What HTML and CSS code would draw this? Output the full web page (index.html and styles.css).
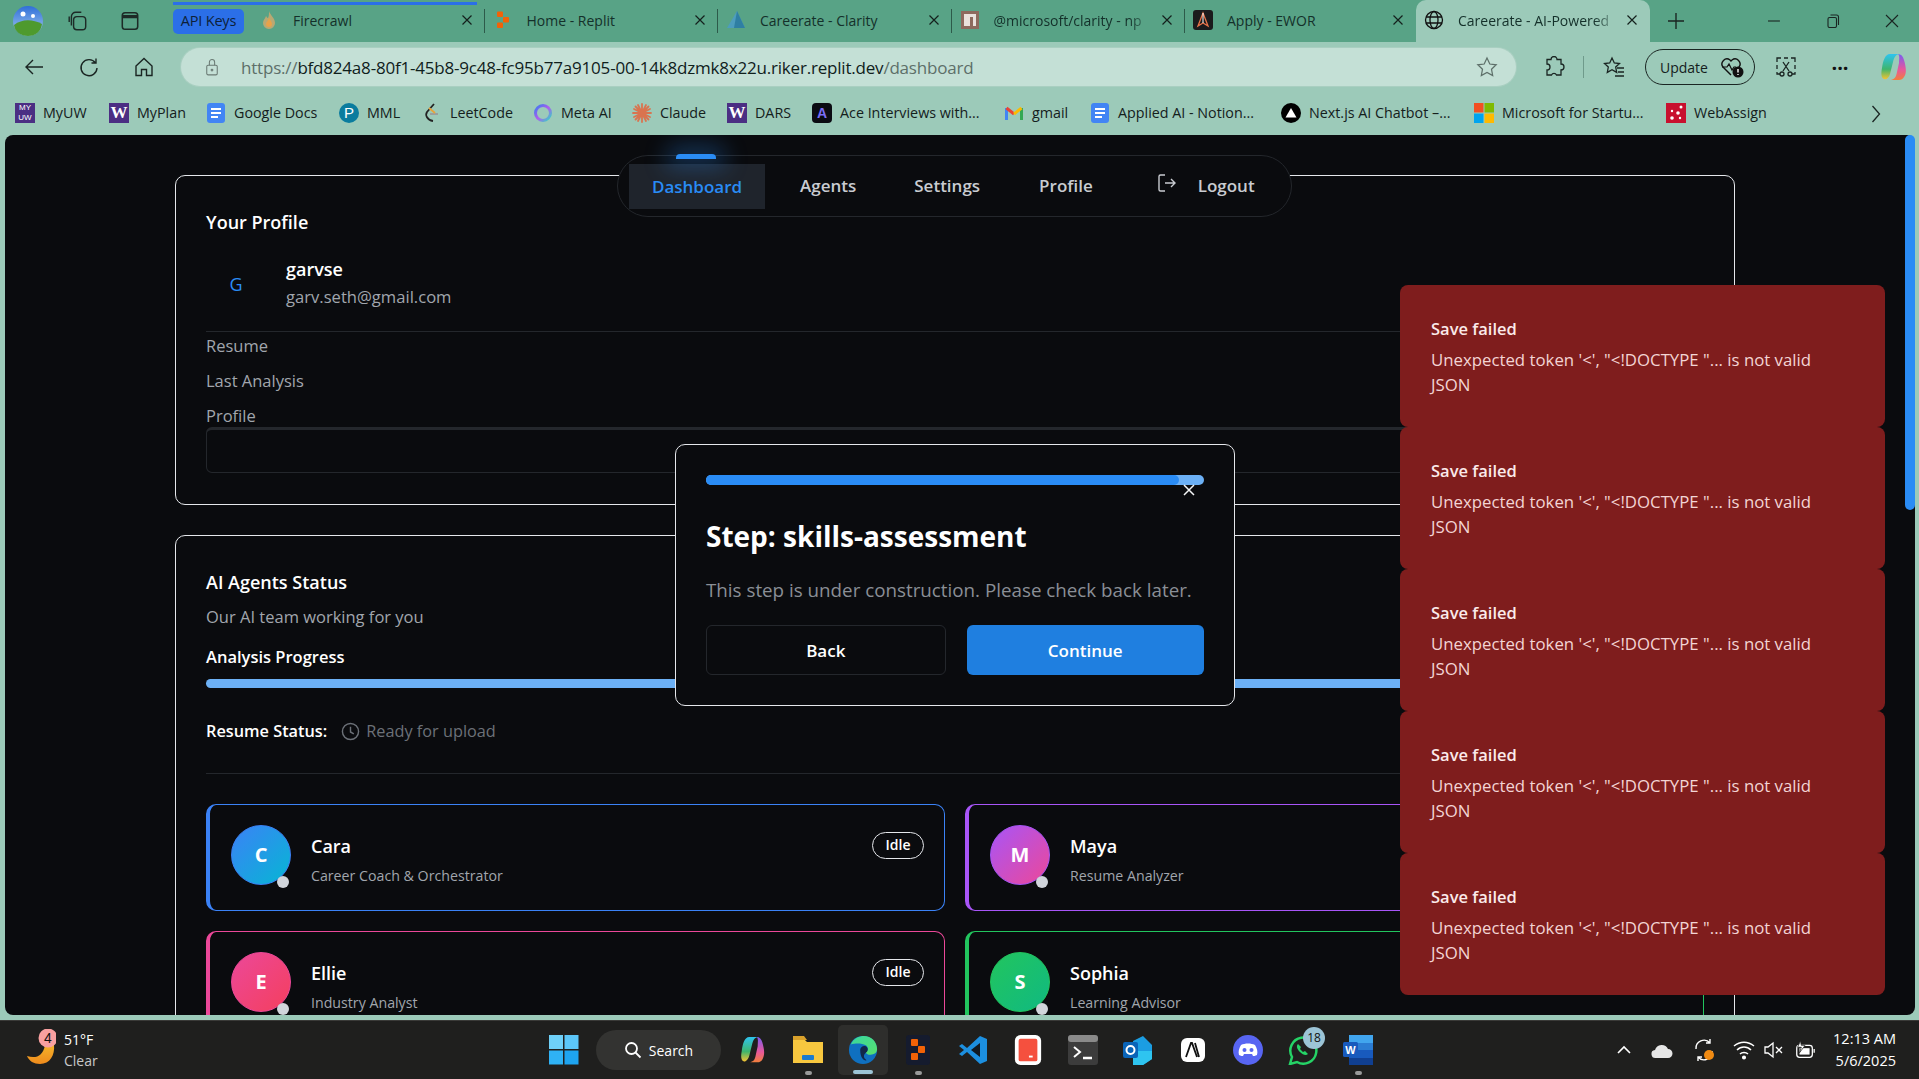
FILE: index.html
```html
<!DOCTYPE html>
<html lang="en">
<head>
    <meta charset="UTF-8">
    <title>Careerate - AI-Powered</title>
    <link rel="stylesheet" href="styles.css">
</head>
<body>
    <!-- browser tabs -->
    <div class="tabstrip">
        <svg class="profile-pic" viewBox="0 0 30 30"><defs><linearGradient id="sky" x1="0" y1="0" x2="0" y2="1"><stop offset="0" stop-color="#2f6fd8"/><stop offset="1" stop-color="#a9cdf2"/></linearGradient></defs><circle cx="15" cy="15" r="15" fill="url(#sky)"/><path d="M1 19c8-6 18-6 28-1-1 8-7 12-14 12S2 26 1 19z" fill="#4e9a2e"/><circle cx="10" cy="8" r="2.5" fill="#fff"/><circle cx="20" cy="10" r="2" fill="#fff"/></svg>
        <svg class="strip-icon icon-workspaces" viewBox="0 0 20 20" fill="none" stroke="#1d2b27" stroke-width="1.3"><rect x="6" y="6" width="11" height="12" rx="3"/><path d="M4 14V6a4 4 0 0 1 4-4h5"/><path d="M2 11V6"/></svg>
        <svg class="strip-icon icon-vtabs" viewBox="0 0 20 20" fill="none" stroke="#1d2b27" stroke-width="1.4"><rect x="3" y="2.500" width="14" height="15" rx="2.500"/><path d="M3 6h14" stroke-width="3"/></svg>

        <div class="group-line"></div>
        <span class="group-pill">API Keys</span>

        <div class="tab tab-first">
            <svg class="tab-icon" viewBox="0 0 20 20"><path d="M10 1c1 4 6 7 6 12a6 6 0 0 1-12 0c0-3 2-4 3-7 1 1 1 2 2 2 1-2 1-4 1-7z" fill="#b9a873"/><path d="M10 8c1 2 3 4 3 6a3 3 0 0 1-6 0c0-2 2-3 3-6z" fill="#e8a24a"/></svg>
            <span class="tab-title">Firecrawl</span>
            <svg class="tab-close" viewBox="0 0 12 12"><path d="M1.500 1.500l9 9M10.500 1.500l-9 9"/></svg>
        </div>
        <div class="tab">
            <svg class="tab-icon" viewBox="0 0 20 20" fill="#f26207"><rect x="4" y="1.500" width="6" height="5.500" rx="1"/><rect x="10" y="7" width="6" height="5.500" rx="1"/><rect x="4" y="12.500" width="6" height="5.500" rx="1"/></svg>
            <span class="tab-title">Home - Replit</span>
            <svg class="tab-close" viewBox="0 0 12 12"><path d="M1.500 1.500l9 9M10.500 1.500l-9 9"/></svg>
        </div>
        <div class="tab">
            <svg class="tab-icon" viewBox="0 0 20 20"><path d="M11 1L1 18h18z" fill="#4d9dbd"/><path d="M11 1l-3 17h11z" fill="#2f7fa3"/></svg>
            <span class="tab-title">Careerate - Clarity</span>
            <svg class="tab-close" viewBox="0 0 12 12"><path d="M1.500 1.500l9 9M10.500 1.500l-9 9"/></svg>
        </div>
        <div class="tab">
            <svg class="tab-icon" viewBox="0 0 20 20"><rect x="1" y="1" width="18" height="18" fill="#8d6a5d"/><path d="M4 4h12v12h-3V7h-3v9H4z" fill="#e9e2dc"/></svg>
            <span class="tab-title tab-fade">@microsoft/clarity - np</span>
            <svg class="tab-close" viewBox="0 0 12 12"><path d="M1.500 1.500l9 9M10.500 1.500l-9 9"/></svg>
        </div>
        <div class="tab tab-nosep">
            <svg class="tab-icon" viewBox="0 0 20 20"><rect width="20" height="20" rx="3" fill="#1b1b1d"/><path d="M10 3l5 13-5-3-5 3z" fill="none" stroke="#e8734a" stroke-width="1.300"/><path d="M10 3v10" stroke="#fff"/></svg>
            <span class="tab-title">Apply - EWOR</span>
            <svg class="tab-close" viewBox="0 0 12 12"><path d="M1.500 1.500l9 9M10.500 1.500l-9 9"/></svg>
        </div>
        <div class="tab tab-active">
            <svg class="tab-icon" viewBox="0 0 20 20" fill="none" stroke="#111" stroke-width="1.300"><circle cx="10" cy="10" r="8.500"/><ellipse cx="10" cy="10" rx="4" ry="8.500"/><path d="M2 7h16M2 13h16"/></svg>
            <span class="tab-title tab-fade">Careerate - AI-Powered</span>
            <svg class="tab-close" viewBox="0 0 12 12"><path d="M1.500 1.500l9 9M10.500 1.500l-9 9"/></svg>
        </div>

        <svg class="new-tab" viewBox="0 0 18 18"><path d="M9 1v16M1 9h16" stroke="#1a2522" stroke-width="1.400"/></svg>
        <div class="win-controls">
            <svg viewBox="0 0 14 14"><path d="M1 7h12"/></svg>
            <svg viewBox="0 0 14 14"><rect x="2" y="3.500" width="8.500" height="10" rx="1.500"/><path d="M4.500 1h6a2 2 0 0 1 2 2v8"/></svg>
            <svg viewBox="0 0 14 14"><path d="M1 1l12 12M13 1L1 13"/></svg>
        </div>
    </div>

    <!-- address bar -->
    <div class="toolbar">
        <svg class="nav-btn btn-back" viewBox="0 0 22 22"><path d="M20 11H3M10 4l-7 7 7 7"/></svg>
        <svg class="nav-btn btn-reload" viewBox="0 0 22 22"><path d="M17.500 7A8 8 0 1 0 19 12M18 2.500V7h-4.500"/></svg>
        <svg class="nav-btn btn-home" viewBox="0 0 22 22"><path d="M3 10l8-7.500 8 7.500v9.500h-5.500v-6h-5v6H3z"/></svg>
        <div class="addressbar">
            <svg class="lock" viewBox="0 0 16 20"><rect x="2" y="8" width="12" height="11" rx="1.500"/><path d="M5 8V4.500a3 3 0 0 1 6 0V8"/><circle cx="8" cy="13.500" r="1"/></svg>
            <span class="url"><span class="url-dim">https://</span>bfd824a8-80f1-45b8-9c48-fc95b77a9105-00-14k8dzmk8x22u.riker.replit.dev<span class="url-dim">/dashboard</span></span>
            <svg class="star" viewBox="0 0 22 22"><path d="M11 2l2.800 6 6.400.8-4.700 4.400 1.200 6.400L11 16.500l-5.700 3.100 1.200-6.400L1.800 8.800 8.200 8z"/></svg>
        </div>
        <svg class="tool-icon tool-ext" viewBox="0 0 22 22"><path d="M8 3.500a3 3 0 0 1 6 0h4v4.500a3 3 0 0 1 0 6V19h-4.500a2.800 2.800 0 0 0-5 0H4v-5a3 3 0 0 0 0-6V3.500z"/></svg>
        <span class="tool-sep"></span>
        <svg class="tool-icon tool-fav" viewBox="0 0 22 22"><path d="M9 2l2.300 5 5.200.6-3.800 3.500 1 5.300L9 13.800l-4.700 2.600 1-5.300L1.500 7.600 6.700 7zM14 12h7M15 16h6M12 20h9"/></svg>
        <div class="update-btn">
            <span>Update</span>
            <svg class="update-heart" viewBox="0 0 24 22"><path d="M11 19L3 11a5 5 0 0 1 7-7l1 1 1-1a5 5 0 0 1 7 7l-1 1" fill="none" stroke="#111" stroke-width="1.400"/><path d="M2 11h5l2-3 3 6 2-3h2" fill="none" stroke="#111" stroke-width="1.200"/><circle cx="18" cy="16" r="5.500" fill="#111"/><path d="M18 13v3.500M18 18v1" stroke="#fff" stroke-width="1.400"/></svg>
        </div>
        <svg class="tool-icon tool-shot" viewBox="0 0 22 22"><path d="M2 6V2h4M9 2h4M16 2h4v4M20 9v4M2 9v4M2 16v2h3M20 16v2h-3"/><path d="M8 6l6 9M14 6l-6 9"/><circle cx="7" cy="18" r="2"/><circle cx="15" cy="18" r="2"/></svg>
        <span class="tool-dots">···</span>
        <svg class="copilot" viewBox="0 0 28 30"><defs><linearGradient id="cpa" x1="0" y1="0" x2="0" y2="1"><stop offset="0" stop-color="#2ec4f0"/><stop offset=".6" stop-color="#3fb56c"/><stop offset="1" stop-color="#f5c332"/></linearGradient><linearGradient id="cpb" x1="0" y1="0" x2="0" y2="1"><stop offset="0" stop-color="#7a5cf0"/><stop offset=".6" stop-color="#e8589a"/><stop offset="1" stop-color="#f27f3c"/></linearGradient></defs><path d="M10 2h9c-4 1-5 4-6 8l-3 12c-1 4-4 6-6 5-3-1-3-6-2-11C3 9 5 2 10 2z" fill="url(#cpa)"/><path d="M18 2c3 0 5 2 6 6 2 7 3 13 0 17-1 2-3 3-5 3h-8c4-1 5-3 6-8l2-9c0-4 1-7-1-9z" fill="url(#cpb)"/></svg>
    </div>

    <!-- bookmarks -->
    <div class="bookmarks">
        <div class="bookmark"><span class="bm-icon bm-uw">MY<br>UW</span>MyUW</div>
        <div class="bookmark"><span class="bm-icon bm-w">W</span>MyPlan</div>
        <div class="bookmark"><svg class="bm-svg" viewBox="0 0 20 20"><rect x="1" width="18" height="20" rx="3" fill="#4285f4"/><path d="M5 5h10v2H5zM5 9h10v2H5zM5 13h7v2H5z" fill="#fff"/></svg>Google Docs</div>
        <div class="bookmark"><span class="bm-icon bm-mml">P</span>MML</div>
        <div class="bookmark"><svg class="bm-svg" viewBox="0 0 20 20" fill="none" stroke-width="1.800"><path d="M12 1L5 9c-2 3 0 8 6 9" stroke="#222"/><path d="M8 11h8" stroke="#9a9a9a"/><path d="M7 5l6 5" stroke="#e8a33a"/></svg>LeetCode</div>
        <div class="bookmark"><svg class="bm-svg" viewBox="0 0 20 20" fill="none"><defs><linearGradient id="meta" x1="0" y1="0" x2="1" y2="1"><stop offset="0" stop-color="#3a7bf0"/><stop offset=".5" stop-color="#b05cf0"/><stop offset="1" stop-color="#2ed9c3"/></linearGradient></defs><circle cx="10" cy="10" r="7.500" stroke="url(#meta)" stroke-width="3"/></svg>Meta AI</div>
        <div class="bookmark"><svg class="bm-svg" viewBox="0 0 20 20" stroke="#d9744f" stroke-width="1.800" stroke-linecap="round"><path d="M10 1v18M1 10h18M3.500 3.500l13 13M16.500 3.500l-13 13M6 2l8 16M14 2L6 18M2 6l16 8M18 6L2 14"/></svg>Claude</div>
        <div class="bookmark"><span class="bm-icon bm-w">W</span>DARS</div>
        <div class="bookmark"><span class="bm-icon bm-ace">A</span>Ace Interviews with...</div>
        <div class="bookmark"><svg class="bm-svg" viewBox="0 0 20 20" fill="none" stroke-width="3"><path d="M2.500 17V5" stroke="#4285f4"/><path d="M17.500 17V5" stroke="#34a853"/><path d="M2.500 5L10 11" stroke="#ea4335"/><path d="M17.500 5L10 11" stroke="#fbbc04"/></svg>gmail</div>
        <div class="bookmark"><svg class="bm-svg" viewBox="0 0 20 20"><rect x="1" width="18" height="20" rx="3" fill="#4285f4"/><path d="M5 5h10v2H5zM5 9h10v2H5zM5 13h7v2H5z" fill="#fff"/></svg>Applied AI - Notion...</div>
        <div class="bookmark"><svg class="bm-svg" viewBox="0 0 20 20"><circle cx="10" cy="10" r="10" fill="#000"/><path d="M10 5l5.500 9.500h-11z" fill="#fff"/></svg>Next.js AI Chatbot –...</div>
        <div class="bookmark"><svg class="bm-svg" viewBox="0 0 20 20"><rect width="9.500" height="9.500" fill="#f25022"/><rect x="10.500" width="9.500" height="9.500" fill="#7fba00"/><rect y="10.500" width="9.500" height="9.500" fill="#00a4ef"/><rect x="10.500" y="10.500" width="9.500" height="9.500" fill="#ffb900"/></svg>Microsoft for Startu...</div>
        <div class="bookmark"><svg class="bm-svg" viewBox="0 0 20 20"><rect width="20" height="20" fill="#c8102e"/><g fill="#fff"><circle cx="6" cy="15" r="1.800"/><circle cx="12" cy="10" r="1.800"/><circle cx="15" cy="4" r="1.500"/><circle cx="6" cy="8" r="1.200"/><circle cx="14" cy="15" r="1.200"/></g></svg>WebAssign</div>
        <svg class="bm-more" viewBox="0 0 10 18"><path d="M1.500 1l7 8-7 8"/></svg>
    </div>

    <!-- page -->
    <div class="viewport">
        <div class="page">
            <main class="content">
                <section class="card profile-card">
                    <h2 class="card-title">Your Profile</h2>
                    <div class="user-row">
                        <div class="user-avatar">G</div>
                        <div>
                            <div class="user-name">garvse</div>
                            <div class="user-email">garv.seth@gmail.com</div>
                        </div>
                    </div>
                    <div class="info-row">Resume</div>
                    <div class="info-row">Last Analysis</div>
                    <div class="info-row info-last">Profile</div>
                    <div class="profile-box"></div>
                </section>

                <section class="card agents-card">
                    <h2 class="card-title">AI Agents Status</h2>
                    <p class="agents-sub">Our AI team working for you</p>
                    <div class="progress-label">Analysis Progress</div>
                    <div class="progress-bar"></div>
                    <div class="resume-status">
                        <strong>Resume Status:</strong>
                        <svg class="clock" viewBox="0 0 20 20"><circle cx="10" cy="10" r="8.500"/><path d="M10 5v5.500l3.500 2"/></svg>
                        <span>Ready for upload</span>
                    </div>
                    <div class="agents-divider"></div>
                    <div class="agents-grid">
                        <div class="agent agent-cara">
                            <div class="agent-avatar">C<span class="agent-dot"></span></div>
                            <div class="agent-info">
                                <div class="agent-name">Cara</div>
                                <div class="agent-role">Career Coach &amp; Orchestrator</div>
                            </div>
                            <span class="agent-badge">Idle</span>
                        </div>
                        <div class="agent agent-maya">
                            <div class="agent-avatar">M<span class="agent-dot"></span></div>
                            <div class="agent-info">
                                <div class="agent-name">Maya</div>
                                <div class="agent-role">Resume Analyzer</div>
                            </div>
                            <span class="agent-badge">Idle</span>
                        </div>
                        <div class="agent agent-ellie">
                            <div class="agent-avatar">E<span class="agent-dot"></span></div>
                            <div class="agent-info">
                                <div class="agent-name">Ellie</div>
                                <div class="agent-role">Industry Analyst</div>
                            </div>
                            <span class="agent-badge">Idle</span>
                        </div>
                        <div class="agent agent-sophia">
                            <div class="agent-avatar">S<span class="agent-dot"></span></div>
                            <div class="agent-info">
                                <div class="agent-name">Sophia</div>
                                <div class="agent-role">Learning Advisor</div>
                            </div>
                            <span class="agent-badge">Idle</span>
                        </div>
                    </div>
                </section>
            </main>

            <!-- floating nav -->
            <nav class="topnav">
                <span class="nav-glow"></span>
                <a class="nav-item nav-active">Dashboard</a>
                <a class="nav-item nav-agents">Agents</a>
                <a class="nav-item nav-settings">Settings</a>
                <a class="nav-item nav-profile">Profile</a>
                <a class="nav-item nav-logout">
                    <svg viewBox="0 0 20 20"><path d="M8 2H3.500A1.500 1.500 0 0 0 2 3.500v13A1.500 1.500 0 0 0 3.500 18H8M8 10h10M14 6l4 4-4 4"/></svg>
                    Logout
                </a>
            </nav>

            <!-- modal -->
            <div class="modal">
                <div class="modal-progress"><div class="modal-progress-fill"></div></div>
                <svg class="modal-close" viewBox="0 0 12 12"><path d="M1 1l10 10M11 1L1 11"/></svg>
                <h1 class="modal-title">Step: skills-assessment</h1>
                <p class="modal-text">This step is under construction. Please check back later.</p>
                <div class="modal-actions">
                    <button class="btn btn-outline">Back</button>
                    <button class="btn btn-primary">Continue</button>
                </div>
            </div>

            <!-- toasts -->
            <div class="toasts">
                <div class="toast"><div class="toast-title">Save failed</div><div class="toast-text">Unexpected token '&lt;', "&lt;!DOCTYPE "... is not valid JSON</div></div>
                <div class="toast"><div class="toast-title">Save failed</div><div class="toast-text">Unexpected token '&lt;', "&lt;!DOCTYPE "... is not valid JSON</div></div>
                <div class="toast"><div class="toast-title">Save failed</div><div class="toast-text">Unexpected token '&lt;', "&lt;!DOCTYPE "... is not valid JSON</div></div>
                <div class="toast"><div class="toast-title">Save failed</div><div class="toast-text">Unexpected token '&lt;', "&lt;!DOCTYPE "... is not valid JSON</div></div>
                <div class="toast"><div class="toast-title">Save failed</div><div class="toast-text">Unexpected token '&lt;', "&lt;!DOCTYPE "... is not valid JSON</div></div>
            </div>
        </div>
        <div class="scrolltrack"><div class="scrollthumb"></div></div>
    </div>

    <!-- windows taskbar -->
    <footer class="taskbar">
        <div class="weather">
            <svg class="weather-icon" viewBox="0 0 32 40"><defs><linearGradient id="moon" x1="0" y1="0" x2="0" y2="1"><stop offset="0" stop-color="#f5b32a"/><stop offset="1" stop-color="#ee8a1c"/></linearGradient></defs><path d="M30 16c1 10-4 19-14 19-6 0-11-3-13-8 9 3 16 0 18-11z" fill="url(#moon)"/><circle cx="24" cy="9" r="9.500" fill="#f8a0a0"/><text x="24" y="14" font-size="14" text-anchor="middle" fill="#111" font-family="Liberation Sans">4</text></svg>
            <div class="weather-text"><div>51°F</div><div class="weather-dim">Clear</div></div>
        </div>
        <div class="task-center">
            <svg class="start" viewBox="0 0 30 30"><rect width="14" height="14" fill="#6fd0f8"/><rect x="15.500" width="14" height="14" fill="#5cc6f8"/><rect y="15.500" width="14" height="14" fill="#2fb2f5"/><rect x="15.500" y="15.500" width="14" height="14" fill="#1ea4f0"/></svg>
            <div class="task-search">
                <svg viewBox="0 0 18 18" fill="none" stroke="#fff" stroke-width="1.800"><circle cx="7.500" cy="7.500" r="5.500"/><path d="M11.500 11.500l5 5"/></svg>
                Search
            </div>
            <div class="task-app"><svg viewBox="0 0 30 32"><defs><linearGradient id="tca" x1="0" y1="0" x2="0" y2="1"><stop offset="0" stop-color="#2ec4f0"/><stop offset=".6" stop-color="#3fb56c"/><stop offset="1" stop-color="#f5c332"/></linearGradient><linearGradient id="tcb" x1="0" y1="0" x2="0" y2="1"><stop offset="0" stop-color="#7a5cf0"/><stop offset=".6" stop-color="#e8589a"/><stop offset="1" stop-color="#f27f3c"/></linearGradient></defs><path d="M11 2h9c-4 1-5 4-6 8l-3 12c-1 4-4 7-6 6-3-1-3-6-2-11C4 9 6 2 11 2z" fill="url(#tca)"/><path d="M19 2c3 0 5 2 6 6 2 7 3 13 0 18-1 2-3 3-5 3h-8c4-1 5-3 6-8l2-9c0-4 1-8-1-10z" fill="url(#tcb)"/></svg></div>
            <div class="task-app app-open"><svg viewBox="0 0 30 30"><path d="M0 4h11l3 3h16v21H0z" fill="#f7c73f"/><path d="M0 1h11l3 4H0z" fill="#d9a12b"/><rect x="9" y="20" width="12" height="5" rx="1" fill="#1a7bd0"/></svg></div>
            <div class="task-app app-active"><svg viewBox="0 0 30 32"><defs><linearGradient id="edg" x1="0" y1="0" x2="1" y2="1"><stop offset="0" stop-color="#38d6a0"/><stop offset="1" stop-color="#58e06e"/></linearGradient></defs><circle cx="15" cy="16" r="15" fill="#0f70c0"/><path d="M2 10C5 3 11 1 16 1c8 0 14 6 14 14 0 4-3 6-7 6-3 0-5-1-5-3 3-1 3-5 0-7-5-3-12-2-16-1z" fill="url(#edg)"/><path d="M12 16c0-3 3-5 6-4 2 1 3 4 1 6-2 1-5 5-1 8 3 2-6 3-6-10z" fill="#12274a"/></svg></div>
            <div class="task-app app-open"><svg viewBox="0 0 30 30"><rect x="3" width="24" height="30" rx="3" fill="#151b2e"/><g fill="#f26207"><rect x="8" y="4" width="7" height="7" rx="1"/><rect x="15" y="11" width="7" height="7" rx="1"/><rect x="8" y="18" width="7" height="7" rx="1"/></g></svg></div>
            <div class="task-app"><svg viewBox="0 0 30 30"><path d="M22 1l7 3v22l-7 3L9 17l-5 4-3-2 5-4-5-4 3-2 5 4z" fill="#1c8fe0"/><path d="M22 8v14l-9-7z" fill="#121a22"/></svg></div>
            <div class="task-app"><svg viewBox="0 0 30 32"><rect x="1" width="28" height="32" rx="6" fill="#fff"/><rect x="5" y="4" width="20" height="24" rx="2" fill="#f5503e"/><rect x="16" y="22" width="4" height="2" fill="#fff"/></svg></div>
            <div class="task-app"><svg viewBox="0 0 30 30"><rect width="30" height="30" rx="3" fill="#3c3c3c"/><rect width="30" height="7" rx="3" fill="#8a8a8a"/><path d="M6 12l6 5-6 5" fill="none" stroke="#fff" stroke-width="2"/><path d="M15 23h9" stroke="#fff" stroke-width="2.500"/></svg></div>
            <div class="task-app"><svg viewBox="0 0 30 30"><path d="M10 6l10-5 9 9v14l-9 6H10z" fill="#1b9de2"/><path d="M10 16h19v8l-9 6H10z" fill="#2ec4f0"/><rect y="7" width="15" height="16" rx="2" fill="#0a64b8"/><circle cx="7.500" cy="15" r="4" fill="none" stroke="#fff" stroke-width="2"/></svg></div>
            <div class="task-app"><svg viewBox="0 0 30 30"><rect x="3" y="3" width="24" height="24" rx="6" fill="#fff"/><path d="M8 22l5-14h1l5 14M17 8l4 14" fill="none" stroke="#111" stroke-width="1.800"/></svg></div>
            <div class="task-app"><svg viewBox="0 0 30 30"><circle cx="15" cy="15" r="15" fill="#5865f2"/><path d="M8 10c4-2 10-2 14 0 2 3 3 7 2 10-2 1-3 1-4 1l-1-2H11l-1 2c-1 0-2 0-4-1-1-3 0-7 2-10z" fill="#fff"/><circle cx="11.500" cy="15" r="2" fill="#5865f2"/><circle cx="18.500" cy="15" r="2" fill="#5865f2"/></svg></div>
            <div class="task-app"><svg viewBox="0 0 30 30"><path d="M2 29l2-7A13 13 0 1 1 9 27z" fill="none" stroke="#25d366" stroke-width="2.500"/><path d="M10 9c-2 2-1 5 2 8s6 4 8 2l-3-3-2 1-3-3 1-2z" fill="#25d366"/></svg><span class="whatsapp-badge">18</span></div>
            <div class="task-app app-open"><svg viewBox="0 0 30 30"><rect x="6" width="24" height="30" rx="2" fill="#2b7cd3"/><rect x="6" y="0" width="24" height="8" fill="#41a5ee"/><rect x="6" y="15" width="24" height="8" fill="#185abd"/><rect x="6" y="23" width="24" height="7" fill="#103f91"/><rect y="7" width="15" height="15" rx="1.500" fill="#185abd"/><text x="7.500" y="19" font-size="11" font-weight="700" text-anchor="middle" fill="#fff" font-family="Liberation Sans">W</text></svg></div>
        </div>
        <div class="tray">
            <svg class="tray-chevron" viewBox="0 0 14 10"><path d="M1 8l6-6 6 6"/></svg>
            <svg class="tray-icon" viewBox="0 0 22 18"><path d="M5 17a4 4 0 0 1-1-8 7 7 0 0 1 13-1 4.500 4.500 0 0 1 0 9z" fill="#e6e6e6"/></svg>
            <svg class="tray-icon tray-sync" viewBox="0 0 22 24" fill="none" stroke="#fff" stroke-width="1.400"><path d="M3 11a8 8 0 0 1 14-6M19 13a8 8 0 0 1-14 6M17 1v4h-4M5 23v-4h4"/><circle cx="16" cy="17" r="5" fill="#f08a12" stroke="none"/></svg>
            <svg class="tray-icon tray-wifi" viewBox="0 0 22 20" fill="none" stroke="#fff" stroke-width="1.500"><path d="M1 6c6-5 14-5 20 0M4 10c4-4 10-4 14 0M7 14c2-2 6-2 8 0"/><circle cx="11" cy="17.500" r="1.300" fill="#fff"/></svg>
            <svg class="tray-icon tray-mute" viewBox="0 0 22 20" fill="none" stroke="#fff" stroke-width="1.300"><path d="M2 7h3l5-4v14l-5-4H2zM13 7l6 6M19 7l-6 6"/></svg>
            <svg class="tray-icon tray-batt" viewBox="0 0 24 20" fill="none" stroke="#fff" stroke-width="1.400"><rect x="3" y="5" width="17" height="13" rx="3"/><path d="M22 9v4"/><rect x="6" y="8" width="11" height="7" fill="#fff" stroke="none"/><path d="M7 0L4 7h4l-2 6 6-8H8z" fill="#fff" stroke="#1f1f1e" stroke-width=".8"/></svg>
            <div class="clock-text"><div>12:13 AM</div><div>5/6/2025</div></div>
        </div>
    </footer>
</body>
</html>
```

FILE: styles.css
```css
* {
    box-sizing: border-box;
}

html, body {
    margin: 0;
    height: 100%;
}

body {
    width: 1919px;
    height: 1079px;
    display: flex;
    flex-direction: column;
    overflow: hidden;
    background: #9ccab9;
    font-family: "Open Sans", "Noto Sans", sans-serif;
    color: #111;
}

/* ---- tab strip ---- */
.tabstrip {
    position: relative;
    height: 42px;
    flex: none;
    display: flex;
    align-items: center;
    background: #58a386;
    padding-left: 13px;
}

.profile-pic {
    width: 30px;
    height: 30px;
    flex: none;
}

.strip-icon {
    width: 22px;
    height: 22px;
    flex: none;
}

.icon-workspaces {
    margin-left: 24px;
}

.icon-vtabs {
    margin-left: 30px;
}

.group-line {
    position: absolute;
    left: 173px;
    top: 2px;
    width: 304px;
    height: 3px;
    background: #2b6fe8;
}

.group-pill {
    margin-left: 32px;
    width: 71px;
    height: 25px;
    flex: none;
    border-radius: 5px;
    background: #2b6fe8;
    color: #0d1f3a;
    font-size: 14.500px;
    letter-spacing: -0.200px;
    line-height: 24px;
    text-align: center;
}

.tab {
    width: 233.500px;
    height: 42px;
    flex: none;
    display: flex;
    align-items: center;
    padding: 0 10px 2px 8px;
    position: relative;
    font-size: 14px;
    color: #14302a;
}

.tab::after {
    content: "";
    position: absolute;
    right: 0;
    top: 9px;
    height: 24px;
    width: 1px;
    background: #2d5a4a;
}

.tab-first {
    margin-left: 7px;
}

.tab-nosep {
    width: 231px;
}

.tab-nosep::after,
.tab-active::after {
    display: none;
}

.tab-active {
    background: #9ccab9;
    border-radius: 10px 10px 0 0;
}

.tab-icon {
    width: 20px;
    height: 20px;
    flex: none;
}

.tab-title {
    flex: 1;
    margin-left: 14px;
    white-space: nowrap;
}

.tab-fade {
    -webkit-mask-image: linear-gradient(to right, #000 82%, transparent 97%);
    mask-image: linear-gradient(to right, #000 82%, transparent 97%);
}

.tab-close {
    width: 12px;
    height: 12px;
    flex: none;
    margin: 0 2px;
    fill: none;
    stroke: #14201c;
    stroke-width: 1.200;
}

.new-tab {
    width: 18px;
    height: 18px;
    flex: none;
    margin-left: 17px;
}

.win-controls {
    margin-left: auto;
    display: flex;
    align-items: center;
    gap: 45px;
    padding-right: 20px;
}

.win-controls svg {
    width: 14px;
    height: 14px;
    fill: none;
    stroke: #1a2522;
    stroke-width: 1.100;
}

/* ---- toolbar ---- */
.toolbar {
    height: 49px;
    flex: none;
    display: flex;
    align-items: center;
    padding-top: 1px;
}

.nav-btn {
    width: 22px;
    height: 22px;
    flex: none;
    fill: none;
    stroke: #1a2522;
    stroke-width: 1.400;
}

.btn-back {
    margin-left: 23px;
}

.btn-reload {
    margin-left: 33px;
}

.btn-home {
    margin-left: 33px;
}

.addressbar {
    margin-left: 26px;
    width: 1335px;
    height: 38px;
    flex: none;
    display: flex;
    align-items: center;
    border-radius: 19px;
    background: #c4e0d6;
    box-shadow: 0 0 0 1px #a9cfc1;
    padding: 0 18px 0 24px;
}

.lock {
    width: 14px;
    height: 18px;
    flex: none;
    fill: none;
    stroke: #6a7a74;
    stroke-width: 1.200;
}

.url {
    margin-left: 22px;
    font-size: 17px;
    letter-spacing: -0.200px;
    color: #10201c;
    white-space: nowrap;
}

.url-dim {
    color: #5d6f69;
}

.star {
    margin-left: auto;
    width: 22px;
    height: 22px;
    fill: none;
    stroke: #5d6f69;
    stroke-width: 1.200;
}

.tool-icon {
    width: 22px;
    height: 22px;
    flex: none;
    fill: none;
    stroke: #1a2522;
    stroke-width: 1.300;
}

.tool-ext {
    margin-left: 27px;
}

.tool-sep {
    width: 1px;
    height: 22px;
    margin-left: 18px;
    background: #6f9a8b;
    flex: none;
}

.tool-fav {
    margin-left: 19px;
}

.update-btn {
    margin-left: 20px;
    width: 110px;
    height: 36px;
    flex: none;
    display: flex;
    align-items: center;
    border: 1.500px solid #1a2522;
    border-radius: 18px;
    padding-left: 14px;
    font-size: 14px;
    color: #14201c;
}

.update-heart {
    width: 24px;
    height: 22px;
    margin-left: 12px;
}

.tool-shot {
    margin-left: 20px;
}

.tool-dots {
    margin-left: 29px;
    width: 28px;
    text-align: center;
    font-size: 20px;
    font-weight: 700;
    flex: none;
}

.copilot {
    margin-left: 26px;
    width: 28px;
    height: 30px;
    flex: none;
}

/* ---- bookmarks ---- */
.bookmarks {
    position: relative;
    height: 44px;
    flex: none;
    display: grid;
    grid-template-columns: 94px 97px 133px 83px 111px 99px 95px 85px 192px 86px 191px 193px 192px 1fr;
    align-items: center;
    padding: 0 0 1px 15px;
    font-size: 14.300px;
    color: #14201c;
    white-space: nowrap;
}

.bookmark {
    display: flex;
    align-items: center;
    gap: 8px;
}

.bm-svg,
.bm-icon {
    width: 20px;
    height: 20px;
    flex: none;
}

.bm-icon {
    display: block;
    text-align: center;
    font-family: "Liberation Serif", serif;
    font-weight: 700;
    color: #fff;
}

.bm-uw {
    background: #4b2e83;
    font-family: "Liberation Sans", sans-serif;
    font-weight: 400;
    font-size: 8px;
    line-height: 10px;
}

.bm-w {
    background: #4b2e83;
    font-size: 17px;
    line-height: 20px;
}

.bm-mml {
    border-radius: 50%;
    background: #0a7c9e;
    font-family: "Liberation Sans", sans-serif;
    font-weight: 400;
    font-size: 15px;
    line-height: 20px;
}

.bm-ace {
    border-radius: 4px;
    background: #0b0b12;
    color: #7b6cf5;
    font-family: "Liberation Sans", sans-serif;
    font-size: 14px;
    line-height: 20px;
}

.bm-more {
    position: absolute;
    left: 1871px;
    top: 14px;
    width: 10px;
    height: 18px;
    fill: none;
    stroke: #1a2522;
    stroke-width: 1.300;
}

/* ---- page ---- */
.viewport {
    flex: 1;
    min-height: 0;
    display: flex;
    padding: 0 4px 5px 5px;
}

.page {
    position: relative;
    flex: 1;
    overflow: hidden;
    background: #0a0b0e;
    border-radius: 8px 0 0 8px;
    color: #f5f6f7;
}

.scrolltrack {
    width: 10px;
    flex: none;
    background: #0a0b0e;
    border-radius: 0 8px 8px 0;
}

.scrollthumb {
    height: 375px;
    background: #2a8cf5;
    border-radius: 5px;
}

.content {
    padding: 40px 170px 0;
}

.card {
    border: 1px solid #e5e7eb;
    border-radius: 10px;
    padding: 30px;
}

.card-title {
    margin: 0;
    font-size: 18px;
    font-weight: 600;
    line-height: 32px;
    color: #fff;
}

.profile-card {
    height: 330px;
}

.user-row {
    margin-top: 16px;
    display: flex;
    align-items: center;
    gap: 20px;
    height: 78px;
    padding-bottom: 18px;
    border-bottom: 1px solid #24272c;
}

.user-avatar {
    width: 60px;
    height: 60px;
    flex: none;
    text-align: center;
    line-height: 60px;
    font-size: 18px;
    color: #2a8cf5;
}

.user-name {
    font-size: 18px;
    font-weight: 600;
    line-height: 26px;
    color: #fff;
}

.user-email {
    font-size: 16.600px;
    line-height: 29px;
    color: #a1a6ad;
}

.info-row {
    height: 35px;
    font-size: 16.500px;
    line-height: 28px;
    color: #a1a6ad;
}

.info-last {
    height: 25px;
}

.profile-box {
    height: 46px;
    border: 1px solid #24272c;
    border-top-width: 3px;
    border-radius: 6px;
}

.agents-card {
    margin-top: 30px;
    padding-bottom: 60px;
}

.agents-sub {
    margin: 5px 0 0;
    font-size: 16.500px;
    line-height: 28px;
    color: #a1a6ad;
}

.progress-label {
    margin-top: 14px;
    font-size: 16.500px;
    font-weight: 600;
    line-height: 24px;
    color: #fff;
}

.progress-bar {
    margin-top: 10px;
    height: 9px;
    border-radius: 5px;
    background: #6cb0f5;
}

.resume-status {
    margin-top: 29px;
    height: 28px;
    display: flex;
    align-items: center;
    font-size: 16.300px;
    color: #6c7178;
}

.resume-status strong {
    font-weight: 600;
    color: #fff;
}

.clock {
    width: 19px;
    height: 19px;
    margin: 0 6px 0 14px;
    fill: none;
    stroke: #6c7178;
    stroke-width: 1.500;
}

.agents-divider {
    margin-top: 28px;
    height: 1px;
    background: #24272c;
}

.agents-grid {
    margin-top: 30px;
    display: grid;
    grid-template-columns: 1fr 1fr;
    gap: 20px;
}

.agent {
    height: 107px;
    display: flex;
    align-items: flex-start;
    border: 1px solid var(--agent-color);
    border-left-width: 4px;
    border-radius: 10px;
    padding: 20px 20px 0 21px;
}

.agent-cara { --agent-color: #3b82f6; --avatar: linear-gradient(135deg, #3b82f6, #06b6d4); }
.agent-maya { --agent-color: #a855f7; --avatar: linear-gradient(135deg, #a855f7, #ec4899); }
.agent-ellie { --agent-color: #ec4899; --avatar: linear-gradient(135deg, #ec4899, #f43f5e); }
.agent-sophia { --agent-color: #22c55e; --avatar: linear-gradient(135deg, #22c55e, #10b981); }

.agent-avatar {
    position: relative;
    width: 60px;
    height: 60px;
    flex: none;
    border-radius: 50%;
    border: 1px solid var(--agent-color);
    background: var(--avatar);
    text-align: center;
    line-height: 58px;
    font-size: 20px;
    font-weight: 700;
    color: #fff;
}

.agent-dot {
    position: absolute;
    right: 1px;
    bottom: -4px;
    width: 12px;
    height: 12px;
    border-radius: 50%;
    background: #d1d5db;
}

.agent-info {
    flex: 1;
    margin-left: 20px;
    padding-top: 7px;
}

.agent-name {
    font-size: 18px;
    font-weight: 600;
    line-height: 28px;
    color: #fff;
}

.agent-role {
    margin-top: 4px;
    font-size: 14.200px;
    line-height: 24px;
    color: #a1a6ad;
}

.agent-badge {
    margin-top: 7px;
    width: 52px;
    height: 27px;
    flex: none;
    border: 1px solid #e5e7eb;
    border-radius: 14px;
    text-align: center;
    font-size: 14px;
    font-weight: 600;
    line-height: 24px;
    color: #fff;
}

/* floating nav */
.topnav {
    position: absolute;
    left: 612px;
    top: 20px;
    width: 675px;
    height: 62px;
    display: flex;
    align-items: center;
    padding-left: 11px;
    border: 1px solid #24272c;
    border-radius: 31px;
    background: #0a0b0e;
}

.nav-glow {
    position: absolute;
    left: 58px;
    top: -2px;
    width: 40px;
    height: 5px;
    border-radius: 4px 4px 0 0;
    background: #2a8cf5;
    box-shadow: 0 0 22px 10px rgba(42, 140, 245, 0.28);
}

.nav-item {
    font-size: 17px;
    font-weight: 600;
    line-height: 46px;
    color: #c9ccd1;
    white-space: nowrap;
}

.nav-active {
    width: 136px;
    height: 45px;
    text-align: center;
    background: #1f242c;
    color: #2a8cf5;
}

.nav-agents {
    margin-left: 35px;
}

.nav-settings {
    margin-left: 58px;
}

.nav-profile {
    margin-left: 59px;
}

.nav-logout {
    margin-left: 64px;
    display: flex;
    align-items: center;
}

.nav-logout svg {
    width: 20px;
    height: 20px;
    margin: -6px 21px 0 0;
    fill: none;
    stroke: #c9ccd1;
    stroke-width: 1.400;
}

/* modal */
.modal {
    position: absolute;
    left: 670px;
    top: 309px;
    width: 560px;
    height: 262px;
    padding: 30px;
    border: 1px solid #e5e7eb;
    border-radius: 10px;
    background: #0a0b0e;
}

.modal-progress {
    height: 10px;
    border-radius: 5px;
    background: #6cb0f5;
}

.modal-progress-fill {
    width: 95%;
    height: 100%;
    border-radius: 5px;
    background: #2a8cf5;
}

.modal-close {
    position: absolute;
    right: 39px;
    top: 39px;
    width: 12px;
    height: 12px;
    fill: none;
    stroke: #f5f6f7;
    stroke-width: 1.500;
}

.modal-title {
    margin: 32px 0 0;
    font-size: 28px;
    font-weight: 700;
    line-height: 38px;
    color: #fff;
}

.modal-text {
    margin: 21px 0 0;
    font-size: 18.800px;
    line-height: 28px;
    color: #8a8f96;
    white-space: nowrap;
}

.modal-actions {
    margin-top: 21px;
    display: flex;
    gap: 21px;
}

.btn {
    flex: 1;
    height: 50px;
    border-radius: 6px;
    font-family: inherit;
    font-size: 17px;
    font-weight: 600;
    color: #fff;
}

.btn-outline {
    border: 1px solid #24272c;
    background: transparent;
}

.btn-primary {
    border: none;
    background: #1f7fe0;
}

/* toasts */
.toasts {
    position: absolute;
    left: 1395px;
    top: 150px;
    width: 485px;
    display: flex;
    flex-direction: column;
}

.toast {
    height: 142px;
    padding: 31px 50px 0 31px;
    border-radius: 8px;
    background: #7f1d1d;
}

.toast-title {
    font-size: 16.500px;
    font-weight: 600;
    line-height: 26px;
    color: #fbeaea;
}

.toast-text {
    margin-top: 5px;
    font-size: 16.800px;
    line-height: 25px;
    color: #f3d4d4;
}

/* ---- taskbar ---- */
.taskbar {
    position: relative;
    height: 59px;
    flex: none;
    background: #1f1f1e;
    border-top: 1px solid #3a3a38;
    color: #fff;
}

.weather {
    position: absolute;
    left: 24px;
    top: 8px;
    display: flex;
    gap: 8px;
}

.weather-icon {
    width: 32px;
    height: 40px;
}

.weather-text {
    font-size: 14px;
    line-height: 21px;
}

.weather-dim {
    color: #c8c8c8;
}

.task-center {
    position: absolute;
    left: 549px;
    top: 0;
    height: 58px;
    display: flex;
    align-items: center;
}

.start {
    width: 30px;
    height: 30px;
    flex: none;
}

.task-search {
    margin-left: 17px;
    width: 125px;
    height: 40px;
    flex: none;
    display: flex;
    align-items: center;
    justify-content: center;
    gap: 7px;
    border-radius: 20px;
    background: #333331;
    font-size: 14px;
}

.task-search svg {
    width: 18px;
    height: 18px;
}

.task-app {
    position: relative;
    width: 50px;
    height: 50px;
    flex: none;
    margin-left: 5px;
    display: flex;
    align-items: center;
    justify-content: center;
}

.task-search + .task-app {
    margin-left: 7px;
}

.task-app svg {
    width: 30px;
    height: 30px;
}

.app-open::after {
    content: "";
    position: absolute;
    left: 22px;
    bottom: 0;
    width: 7px;
    height: 4px;
    border-radius: 2px;
    background: #9a9a9a;
}

.app-active {
    background: #2e2e2c;
    border-radius: 5px;
}

.app-active::after {
    content: "";
    position: absolute;
    left: 15px;
    bottom: 1px;
    width: 20px;
    height: 4px;
    border-radius: 2px;
    background: #9cc4d6;
}

.whatsapp-badge {
    position: absolute;
    right: 3px;
    top: 2px;
    width: 22px;
    height: 22px;
    border-radius: 50%;
    background: #9cc4d6;
    color: #111;
    font-size: 12px;
    line-height: 22px;
    text-align: center;
}

.tray {
    position: absolute;
    right: 23px;
    top: 0;
    height: 58px;
    display: flex;
    align-items: center;
}

.tray-chevron {
    width: 14px;
    height: 10px;
    fill: none;
    stroke: #fff;
    stroke-width: 1.600;
}

.tray-icon {
    width: 22px;
    height: 22px;
    margin-left: 20px;
}

.tray-sync {
    height: 26px;
}

.tray-wifi {
    margin-left: 18px;
}

.tray-mute {
    margin-left: 8px;
}

.tray-batt {
    margin-left: 9px;
}

.clock-text {
    margin-left: 17px;
    text-align: right;
    font-size: 14.500px;
    line-height: 22px;
}
```
